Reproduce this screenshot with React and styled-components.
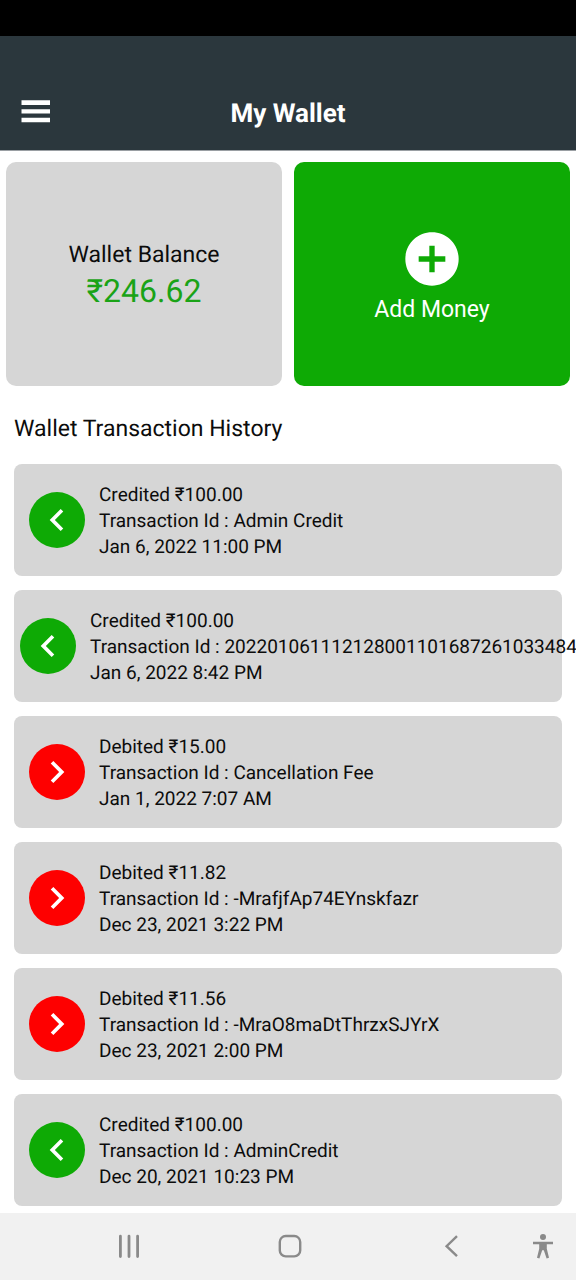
import React from 'react';
import styled, { createGlobalStyle } from 'styled-components';
import { MdAddCircle, MdChevronLeft, MdChevronRight } from 'react-icons/md';

const GlobalStyle = createGlobalStyle`
  * {
    box-sizing: border-box;
  }

  body {
    margin: 0;
    background: #fff;
    color: #0c0c0c;
    font-family: Roboto, 'Noto Sans', sans-serif;
    text-rendering: geometricPrecision;
  }

  button {
    border: 0;
    padding: 0;
    background: none;
    color: inherit;
    font: inherit;
    cursor: pointer;
  }

  svg {
    display: block;
  }
`;

const Screen = styled.div`
  display: flex;
  flex-direction: column;
  min-height: 100vh;
  overflow-x: clip;
`;

const StatusBar = styled.div`
  height: 36px;
  background: #000;
`;

const Header = styled.header`
  display: grid;
  grid-template-columns: 1fr auto 1fr;
  align-items: center;
  padding: 58px 20px 16px;
  background: #2b373d;
  border-bottom: 1px solid #9a9fa3;
  color: #fff;
`;

const MenuButton = styled.button`
  justify-self: start;
`;

const Title = styled.h1`
  margin: 0;
  font-size: 26px;
  line-height: 40px;
  font-weight: 700;
`;

const Cards = styled.section`
  display: grid;
  grid-template-columns: 1fr 1fr;
  gap: 12px;
  padding: 11px 6px 0;
`;

const Card = styled.div`
  display: flex;
  flex-direction: column;
  align-items: center;
  justify-content: center;
  min-height: 224px;
  padding-top: 2px;
  border-radius: 10px;
  background: #d6d6d6;
  font-size: 23px;
  line-height: 32px;
`;

const AddCard = styled(Card)`
  && {
    gap: 3px;
    padding-top: 5px;
    background: #0eaa05;
    color: #fff;
    font-size: 23px;
    line-height: 32px;
  }
`;

const Balance = styled.strong`
  color: #1aa317;
  font-size: 32px;
  line-height: 40px;
  font-weight: 400;
`;

const History = styled.main`
  flex: 1;
  padding: 29px 14px 7px;
`;

const HistoryTitle = styled.h2`
  margin: 0 0 21px;
  font-size: 23px;
  line-height: 28px;
  font-weight: 400;
`;

const List = styled.ul`
  display: flex;
  flex-direction: column;
  gap: 14px;
  margin: 0;
  padding: 0;
  list-style: none;
`;

const Row = styled.li`
  display: flex;
  align-items: center;
  gap: 14px;
  height: 112px;
  padding: 0 ${({ $long }) => ($long ? '6px' : '15px')};
  border-radius: 8px;
  background: #d6d6d6;
`;

const Badge = styled.span`
  display: flex;
  flex: none;
  align-items: center;
  justify-content: center;
  width: 56px;
  height: 56px;
  border-radius: 50%;
  background: ${({ $credit }) => ($credit ? '#0eaa05' : '#fe0000')};
  color: #fff;
`;

const Details = styled.div`
  min-width: 0;
  padding-top: 2px;
  font-size: 19px;
  line-height: 26px;
  white-space: nowrap;
`;

const NavBar = styled.nav`
  position: sticky;
  bottom: 0;
  display: grid;
  grid-template-columns: 114fr 208fr 116fr 66fr;
  height: 67px;
  padding-left: 12.5%;
  background: #f1f1f1;
  color: #8a8a8a;
`;

const NavButton = styled.button`
  display: flex;
  align-items: center;
  justify-content: center;
`;

const NavIcon = ({ children }) => (
  <svg width="28" height="28" viewBox="0 0 28 28" fill="none" stroke="currentColor" strokeWidth="2.4">
    {children}
  </svg>
);

const transactions = [
  { credit: true, amount: '100.00', id: 'Admin Credit', date: 'Jan 6, 2022 11:00 PM' },
  { credit: true, amount: '100.00', id: '2022010611121280011016872610334844', date: 'Jan 6, 2022 8:42 PM' },
  { credit: false, amount: '15.00', id: 'Cancellation Fee', date: 'Jan 1, 2022 7:07 AM' },
  { credit: false, amount: '11.82', id: '-MrafjfAp74EYnskfazr', date: 'Dec 23, 2021 3:22 PM' },
  { credit: false, amount: '11.56', id: '-MraO8maDtThrzxSJYrX', date: 'Dec 23, 2021 2:00 PM' },
  { credit: true, amount: '100.00', id: 'AdminCredit', date: 'Dec 20, 2021 10:23 PM' },
];

const Transaction = ({ credit, amount, id, date }) => (
  <Row $long={id.length > 30}>
    <Badge $credit={credit}>
      {credit ? <MdChevronLeft size={44} /> : <MdChevronRight size={44} />}
    </Badge>
    <Details>
      <div>
        {credit ? 'Credited' : 'Debited'} ₹{amount}
      </div>
      <div>Transaction Id : {id}</div>
      <div>{date}</div>
    </Details>
  </Row>
);

const App = () => (
  <Screen>
    <GlobalStyle />
    <StatusBar />
    <Header>
      <MenuButton type="button" aria-label="Menu">
        <svg width="32" height="32" viewBox="0 0 32 32" fill="currentColor">
          <path d="M1.5 2.3h28.5v4.8H1.5zM1.5 11.2h28.5v4.4H1.5zM1.5 19.8h28.5v4.4H1.5z" />
        </svg>
      </MenuButton>
      <Title>My Wallet</Title>
    </Header>

    <Cards>
      <Card>
        <span>Wallet Balance</span>
        <Balance>₹246.62</Balance>
      </Card>
      <AddCard as="button" type="button">
        <MdAddCircle size={64} />
        <span>Add Money</span>
      </AddCard>
    </Cards>

    <History>
      <HistoryTitle>Wallet Transaction History</HistoryTitle>
      <List>
        {transactions.map(item => (
          <Transaction key={item.date} {...item} />
        ))}
      </List>
    </History>

    <NavBar>
      <NavButton type="button" aria-label="Recent apps">
        <NavIcon>
          <path d="M5.4 3.2v20.4M14 3.2v20.4M22.6 3.2v20.4" strokeWidth="2.8" strokeLinecap="round" />
        </NavIcon>
      </NavButton>
      <NavButton type="button" aria-label="Home">
        <NavIcon>
          <rect x="3.8" y="3" width="20.4" height="20.4" rx="6" />
        </NavIcon>
      </NavButton>
      <NavButton type="button" aria-label="Back">
        <NavIcon>
          <path d="M19 3.2L8.6 13.2 19 23.2" />
        </NavIcon>
      </NavButton>
      <NavButton type="button" aria-label="Accessibility">
        <NavIcon>
          <g fill="currentColor" stroke="none">
            <circle cx="14" cy="4" r="3" />
            <path d="M4 8.8h20v2.4h-6.2v4.6l2.2 9-2.4.7-2.8-8.3h-1.6l-2.8 8.3-2.4-.7 2.2-9v-4.6H4z" />
          </g>
        </NavIcon>
      </NavButton>
    </NavBar>
  </Screen>
);

export default App;
